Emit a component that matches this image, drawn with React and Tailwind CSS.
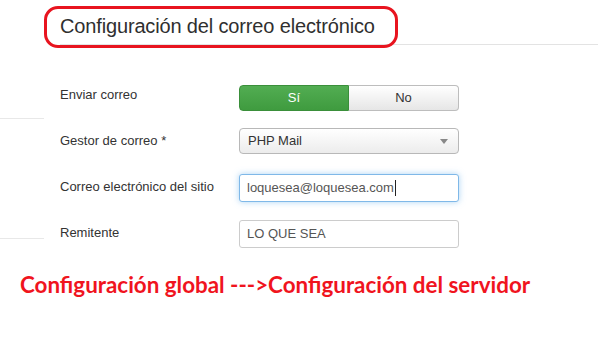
const FormRow = ({ label, labelPt = "pt-[13px]", ctrlPt = "pt-[9px]", children }) => (
  <div className="flex h-[46px] items-start">
    <div className={`w-[179px] ${labelPt} text-[13px] leading-[18px] text-[#333]`}>{label}</div>
    <div className={`w-[220px] ${ctrlPt}`}>{children}</div>
  </div>
);

const Toggle = () => (
  <div className="flex h-[26px] w-[220px] text-[13px] leading-[18px]">
    <div className="flex w-[110px] items-center justify-center rounded-l-[4px] border border-[#3a8f3a] bg-gradient-to-b from-[#52ad52] to-[#3f9b3f] text-white">
      Sí
    </div>
    <div className="flex w-[110px] items-center justify-center rounded-r-[4px] border border-l-0 border-[#bdbdbd] bg-gradient-to-b from-[#ffffff] to-[#e6e6e6] text-[#333]">
      No
    </div>
  </div>
);

const Select = () => (
  <div className="flex h-[26px] items-center justify-between rounded-[4px] border border-[#b8b8b8] bg-gradient-to-b from-[#ffffff] to-[#ececec] pl-[8px] pr-[10px] text-[13px] text-[#333]">
    <span>PHP Mail</span>
    <svg width="8" height="5" viewBox="0 0 8 5">
      <path d="M0 0 L8 0 L4 5 Z" fill="#888" />
    </svg>
  </div>
);

const Input = ({ value, focused }) => (
  <div
    className={`flex h-[28px] items-center rounded-[3px] border bg-white pl-[7px] text-[13px] text-[#555] ${
      focused
        ? "border-[#7fb8e8] shadow-[0_0_6px_rgba(102,175,233,0.55)]"
        : "border-[#cccccc]"
    }`}
  >
    <span>{value}</span>
    {focused && <span className="ml-[1px] h-[16px] w-px bg-[#222]" />}
  </div>
);

export default function App() {
  return (
    <div
      className="relative flex h-[359px] w-[598px] flex-col overflow-hidden bg-white"
      style={{ fontFamily: '"Liberation Sans", Arial, sans-serif' }}
    >
      <div className="flex">
        <div className="flex w-[44px] flex-col">
          <div className="h-[119px] border-b border-[#e8e8e8]" />
          <div className="h-[120px] border-b border-[#e8e8e8]" />
        </div>
        <div className="flex-1 pl-[16px]">
          <div className="h-[45px] border-b border-[#e3e3e3] pt-[12px] text-[20px] leading-[28px] tracking-[-0.15px] text-[#2f2f2f]">
            Configuración del correo electrónico
          </div>
          <div className="pt-[28px]">
            <FormRow label="Enviar correo" ctrlPt="pt-[12px]">
              <Toggle />
            </FormRow>
            <FormRow label="Gestor de correo *">
              <Select />
            </FormRow>
            <FormRow label="Correo electrónico del sitio">
              <Input value="loquesea@loquesea.com" focused />
            </FormRow>
            <FormRow label="Remitente">
              <Input value="LO QUE SEA" />
            </FormRow>
          </div>
        </div>
      </div>

      <div
        className="mt-[16px] pl-[20px] text-[22.4px] font-bold leading-[24px] text-[#f0141e]"
        style={{ fontFamily: "Lato, sans-serif" }}
      >
        Configuración global ---&gt;Configuración del servidor
      </div>

      {/* hand-drawn annotation */}
      <div className="absolute left-[44px] top-[6px] h-[42px] w-[354px] rounded-[14px] border-[3px] border-[#e8141f]" />
    </div>
  );
}
